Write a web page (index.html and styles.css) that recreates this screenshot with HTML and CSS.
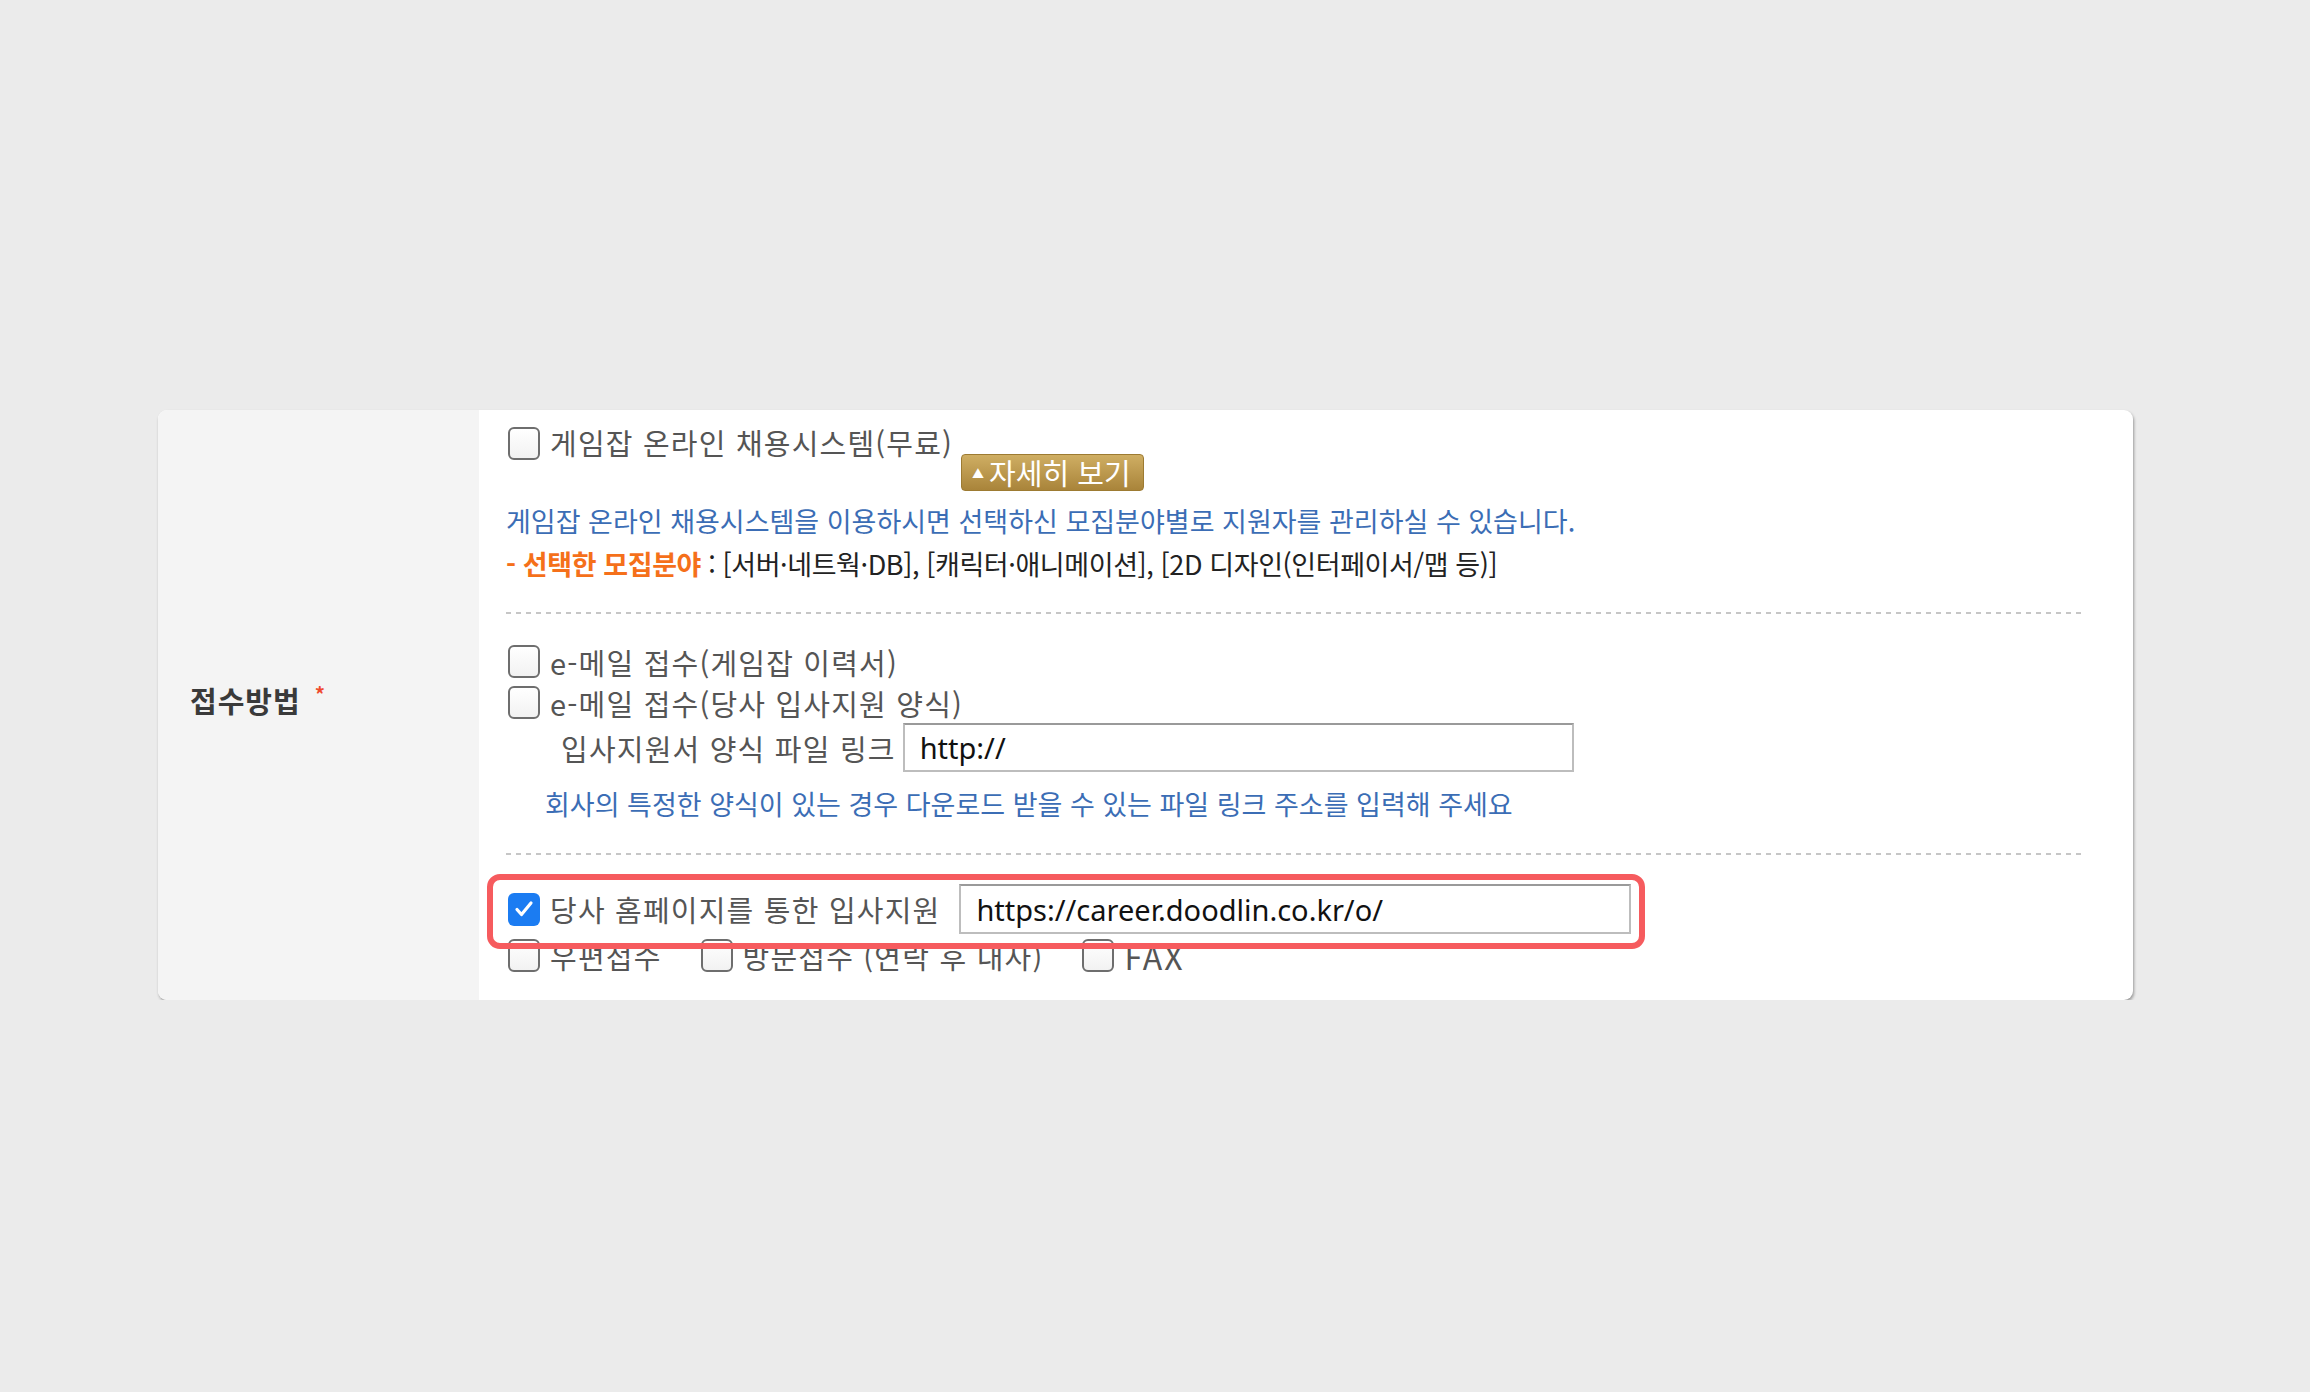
FILE: index.html
```html
<!DOCTYPE html>
<html lang="ko">
<head>
    <meta charset="UTF-8">
    <meta name="viewport" content="width=device-width, initial-scale=1.0">
    <title>접수방법</title>
    <link rel="stylesheet" href="styles.css">
</head>
<body>

  <div class="card">
    <div class="field-label">접수방법 <span class="req">*</span></div>

    <div class="field-body">
        <!-- 온라인 채용시스템 -->
        <div class="row row-first">
            <span class="cb"></span>
            <span class="opt">게임잡 온라인 채용시스템(무료)</span>
            <button type="button" class="btn-more"><span class="tri">▲</span>자세히 보기</button>
        </div>
        <p class="note">게임잡 온라인 채용시스템을 이용하시면 선택하신 모집분야별로 지원자를 관리하실 수 있습니다.</p>
        <p class="picked"><b>- 선택한 모집분야</b> : [서버·네트웍·DB], [캐릭터·애니메이션], [2D 디자인(인터페이서/맵 등)]</p>

        <div class="dash"></div>

        <!-- 이메일 접수 -->
        <div class="row row-mail">
            <span class="cb"></span>
            <span class="opt">e-메일 접수(게임잡 이력서)</span>
        </div>
        <div class="row row-mail">
            <span class="cb"></span>
            <span class="opt">e-메일 접수(당사 입사지원 양식)</span>
        </div>
        <div class="row row-link">
            <label for="formLink" class="opt">입사지원서 양식 파일 링크</label>
            <input type="text" id="formLink" class="url" value="http://">
        </div>
        <p class="note note-hint">회사의 특정한 양식이 있는 경우 다운로드 받을 수 있는 파일 링크 주소를 입력해 주세요</p>

        <div class="dash dash-2"></div>

        <!-- 홈페이지 / 기타 -->
        <div class="row row-home">
            <span class="cb on">
                <svg width="22" height="22" viewBox="0 0 22 22"><path d="M4 11.5l4.5 5L18 5" fill="none" stroke="#fff" stroke-width="3.2" stroke-linecap="round" stroke-linejoin="round"/></svg>
            </span>
            <span class="opt">당사 홈페이지를 통한 입사지원</span>
            <input type="text" class="url url-home" value="https://career.doodlin.co.kr/o/">
            <div class="mark"></div>
        </div>
        <div class="row row-etc">
            <span class="cb"></span>
            <span class="opt">우편접수</span>
            <span class="cb"></span>
            <span class="opt">방문접수 (연락 후 내사)</span>
            <span class="cb"></span>
            <span class="opt opt-fax">FAX</span>
        </div>
    </div>
  </div>

</body>
</html>
```

FILE: styles.css
```css
body {
    margin: 0;
    background-color: #ebebeb;
    font-family: "Noto Sans CJK KR", "Noto Sans", sans-serif;
    color: #555;
}
.card {
    display: grid;
    grid-template-columns: 321px 1fr;
    width: 1975px;
    height: 590px;
    margin: 410px 0 0 158px;
    background-color: #fff;
    border-radius: 9px;
    box-shadow: 1px 2px 3px rgba(0, 0, 0, 0.35);
    overflow: hidden;
}
.field-label {
    display: flex;
    align-items: center;
    padding: 0 0 10px 32px;
    background-color: #f4f4f4;
    font-size: 29px;
    font-weight: bold;
    color: #3a3a3a;
    letter-spacing: 1px;
}
.req {
    color: #ef4a2d;
    font-size: 20px;
    margin: -14px 0 0 14px;
}
.field-body {
    padding: 17px 51px 0 27px;
}
.row {
    display: flex;
    align-items: center;
}
.opt {
    font-size: 29px;
    letter-spacing: 1.2px;
    color: #555;
    white-space: nowrap;
}
.cb {
    box-sizing: border-box;
    width: 32px;
    height: 33px;
    margin: 0 10px 0 2px;
    border: 2px solid #6e6e6e;
    border-radius: 6px;
    background: linear-gradient(#fff, #f2f2f2);
    flex: none;
}
.cb.on {
    display: flex;
    align-items: center;
    justify-content: center;
    border: none;
    background: #1b7cf2;
}
.row-first {
    align-items: flex-start;
}
.row-first .opt {
    line-height: 32px;
    margin-top: -1px;
}
.btn-more {
    margin: 27px 0 0 8px;
    height: 37px;
    padding: 0 12px 0 10px;
    border: 1px solid #9d7b32;
    border-radius: 4px;
    background: linear-gradient(#cfae63, #a9843a);
    color: #fff;
    font-family: inherit;
    font-size: 29px;
    line-height: 33px;
    letter-spacing: 0;
}
.tri {
    font-size: 12px;
    vertical-align: 6px;
    margin-right: 5px;
}
.note {
    margin: 8px 0 0;
    font-size: 27px;
    line-height: 43px;
    letter-spacing: 0;
    color: #3b6db5;
    white-space: nowrap;
}
.picked {
    margin: 0;
    font-size: 27px;
    line-height: 43px;
    letter-spacing: -0.4px;
    color: #222;
    white-space: nowrap;
}
.picked b {
    color: #f5701a;
}
.dash {
    height: 2px;
    margin-top: 27px;
    background: repeating-linear-gradient(to right, #c6c6c6 0 5px, transparent 5px 10px);
}
.row-mail {
    height: 41px;
}
.dash + .row-mail {
    margin-top: 27px;
}
.row-link {
    height: 49px;
    padding-left: 55px;
}
.url {
    box-sizing: border-box;
    width: 671px;
    height: 49px;
    margin-left: 7px;
    padding: 0 15px;
    border: 2px solid #bdbdbd;
    border-top-color: #9a9a9a;
    font-family: "Noto Sans", sans-serif;
    font-size: 29px;
    color: #111;
}
.note-hint {
    margin: 11px 0 0 39px;
    line-height: 42px;
    letter-spacing: 0;
}
.dash-2 {
    margin-top: 28px;
}
.row-home {
    position: relative;
    height: 50px;
    margin-top: 29px;
}
.url-home {
    width: 672px;
    height: 50px;
    margin-left: 19px;
}
.mark {
    position: absolute;
    left: -19px;
    top: -10px;
    box-sizing: border-box;
    width: 1158px;
    height: 75px;
    border: 6px solid #f65b5e;
    border-radius: 13px;
    pointer-events: none;
}
.row-etc {
    height: 33px;
    margin-top: 5px;
}
.row-etc .opt {
    margin-right: 37px;
}
.row-etc .opt-fax {
    font-size: 32px;
    letter-spacing: 2px;
}
```
